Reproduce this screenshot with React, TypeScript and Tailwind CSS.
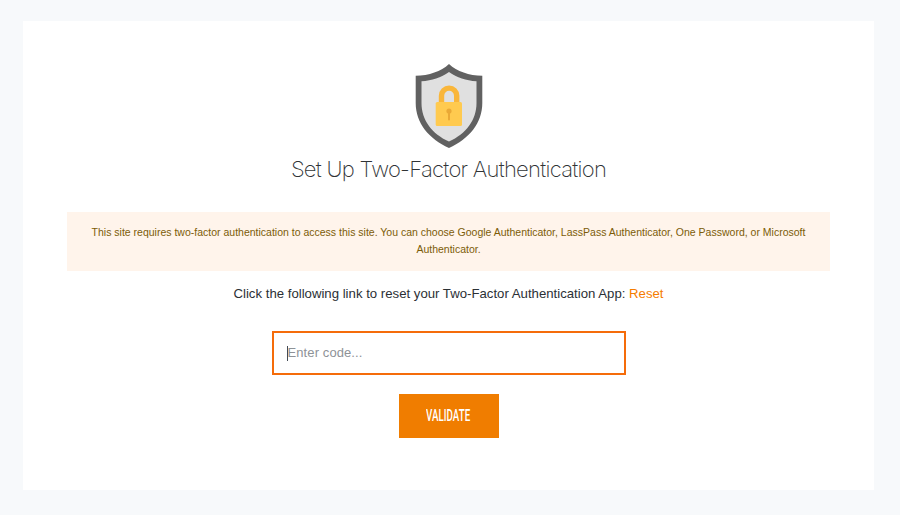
function ShieldIcon() {
  return (
    <svg width="68" height="84" viewBox="0 0 68 84" aria-hidden="true">
      <path d="M34 0C26 7.5 14 11.5 .7 11.8V39C.7 59 14 75 34 84C54 75 67.3 59 67.3 39V11.8C54 11.5 42 7.5 34 0Z" fill="#616161" />
      <path d="M34 8C26 13.8 17 16.7 6.5 17.2V39C6.5 56 17 70 34 77.5C51 70 61.5 56 61.5 39V17.2C51 16.7 42 13.8 34 8Z" fill="#e0e0e0" />
      <path d="M26.5 41V31.7a7.6 7.6 0 0 1 15.2 0V41" fill="none" stroke="#f9b63a" strokeWidth="5.4" />
      <rect x="20.7" y="38" width="26.3" height="24" rx="1.5" fill="#ffca4f" />
      <circle cx="34" cy="47" r="2.6" fill="#eaa936" />
      <rect x="33" y="48" width="2" height="8.5" rx="1" fill="#eaa936" />
    </svg>
  );
}

export default function App() {
  return (
    <main className="h-[515px] w-[900px] overflow-hidden bg-[#f7f9fb] pl-[23px] pt-[21px] font-['Liberation_Sans',Arial,sans-serif]">
      <section className="flex h-[469px] w-[851px] flex-col items-center bg-white pt-[43px]">
        <ShieldIcon />
        <h1 className="mt-[4px] h-[34px] whitespace-nowrap font-['Inter',sans-serif] text-[22px] font-extralight leading-[35px] tracking-[-0.72px] text-[#303335]">
          Set Up Two-Factor Authentication
        </h1>
        <div className="mt-[26px] h-[59px] w-[763px] bg-[#fff4eb] pt-[12px] text-center text-[10.5px] leading-[17px] text-[#7c5c08]">
          <p className="whitespace-nowrap">
            This site requires two-factor authentication to access this site. You can choose Google Authenticator, LassPass Authenticator, One Password, or Microsoft
          </p>
          <p>Authenticator.</p>
        </div>
        <p className="mt-[13px] h-[20px] whitespace-nowrap text-[13.2px] leading-[20px] text-[#2b3035]">
          Click the following link to reset your Two-Factor Authentication App: <a href="#reset" className="text-[#f57c00]">Reset</a>
        </p>
        <div className="mt-[27px] flex h-[44px] w-[354px] items-center border-2 border-[#f56c0a] pl-[13px]">
          <span className="h-[15px] w-px bg-[#444b55]" />
          <span className="text-[13px] tracking-[0.1px] text-[#8e9297]">Enter code...</span>
        </div>
        <button className="mt-[19px] flex h-[44px] w-[100px] items-center justify-center bg-[#f07d00] font-['Roboto',sans-serif] text-[16px] font-medium text-white">
          <span className="scale-x-[0.61]">VALIDATE</span>
        </button>
      </section>
    </main>
  );
}
